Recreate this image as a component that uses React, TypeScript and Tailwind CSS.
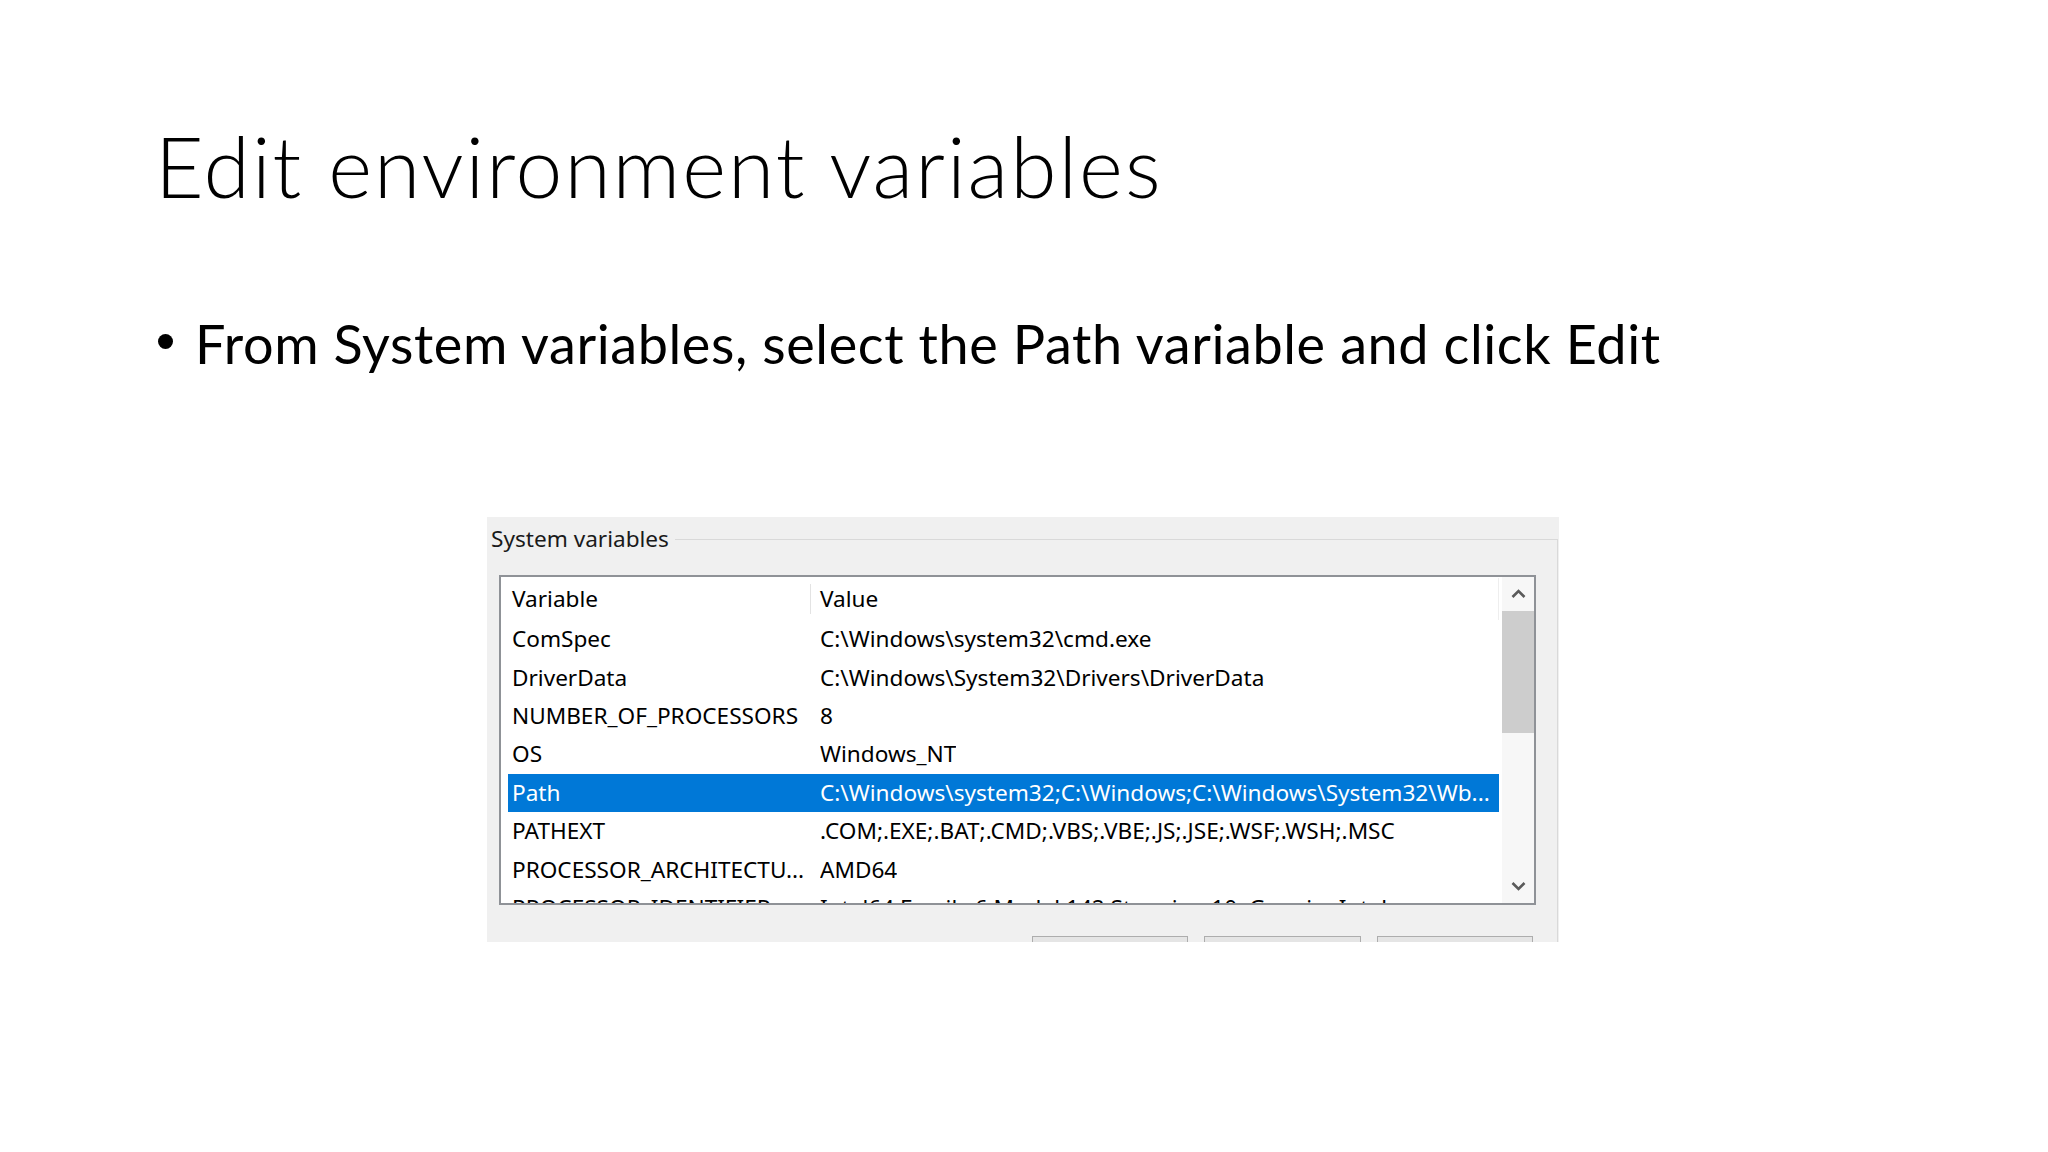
import React from "react";

const systemVariables = [
  { name: "ComSpec", value: "C:\\Windows\\system32\\cmd.exe" },
  { name: "DriverData", value: "C:\\Windows\\System32\\Drivers\\DriverData" },
  { name: "NUMBER_OF_PROCESSORS", value: "8" },
  { name: "OS", value: "Windows_NT" },
  {
    name: "Path",
    value: "C:\\Windows\\system32;C:\\Windows;C:\\Windows\\System32\\Wb...",
    selected: true,
  },
  { name: "PATHEXT", value: ".COM;.EXE;.BAT;.CMD;.VBS;.VBE;.JS;.JSE;.WSF;.WSH;.MSC" },
  { name: "PROCESSOR_ARCHITECTU...", value: "AMD64" },
  { name: "PROCESSOR_IDENTIFIER", value: "Intel64 Family 6 Model 142 Stepping 10, GenuineIntel" },
];

const Chevron = ({ up }: { up?: boolean }) => (
  <svg width="15" height="10" viewBox="0 0 15 10" fill="none">
    <polyline
      points={up ? "1.5,8 7.5,2 13.5,8" : "1.5,2 7.5,8 13.5,2"}
      stroke="#5a5a5a"
      strokeWidth="2.6"
    />
  </svg>
);

const VariableRow = ({
  name,
  value,
  selected,
}: {
  name: string;
  value: string;
  selected?: boolean;
}) => {
  return (
    <div
      className={`ml-[7px] flex h-[38.4px] shrink-0 items-center whitespace-nowrap ${
        selected ? "bg-[#0078d7] text-white" : "text-black"
      }`}
    >
      <span className="w-[312px] shrink-0 overflow-hidden pl-[4px]">{name}</span>
      <span className="overflow-hidden">{value}</span>
    </div>
  );
};

const SystemVariablesPanel = () => {
  return (
    <div className="ml-[487px] mt-[146px] h-[425px] w-[1072px] overflow-hidden bg-[#f0f0f0] pl-[4px] pr-[1px] pt-[8px] [font-family:'Noto_Sans',sans-serif] text-[22.6px]">
      <fieldset className="border-r border-t border-[#d9d9d9]">
        <legend className="h-[28px] pr-[6px] leading-[28px] text-[#1a1a1a]">System variables</legend>

        {/* list view */}
        <div className="ml-[8px] mt-[22px] flex h-[330px] w-[1037px] border-2 border-[#8f9297] bg-white">
          <div className="flex min-w-0 flex-1 flex-col overflow-hidden">
            <div className="ml-[7px] flex h-[43px] shrink-0 items-center text-black">
              <span className="w-[302px] shrink-0 pl-[4px]">Variable</span>
              <span className="h-[30px] w-px bg-[#e3e3e3]" />
              <span className="flex-1 pl-[9px]">Value</span>
              <span className="h-[42px] w-px bg-[#eeeeee]" />
            </div>
            {systemVariables.map((v) => (
              <VariableRow key={v.name} name={v.name} value={v.value} selected={v.selected} />
            ))}
          </div>

          {/* scrollbar */}
          <div className="ml-[3px] flex w-[32px] shrink-0 flex-col bg-[#f7f7f7]">
            <div className="flex h-[34px] items-center justify-center">
              <Chevron up />
            </div>
            <div className="h-[122px] bg-[#cdcdcd]" />
            <div className="flex-1" />
            <div className="flex h-[34px] items-center justify-center">
              <Chevron />
            </div>
          </div>
        </div>

        {/* buttons */}
        <div className="mt-[31px] flex justify-end gap-[16px] pr-[24px]">
          <div className="h-[44px] w-[156px] border border-[#adadad] bg-[#e5e5e5]" />
          <div className="h-[44px] w-[157px] border border-[#adadad] bg-[#e5e5e5]" />
          <div className="h-[44px] w-[156px] border border-[#adadad] bg-[#e5e5e5]" />
        </div>
      </fieldset>
    </div>
  );
};

export default function App() {
  return (
    <div className="h-[1152px] w-[2048px] overflow-hidden bg-white text-black">
      <h1 className="pl-[155px] pt-[124px] text-[84px] font-light leading-none tracking-[2px] [font-family:Lato,sans-serif]">
        Edit environment variables
      </h1>

      <div className="mt-[109px] flex pl-[158px] [font-family:Lato,sans-serif]">
        <span className="mt-[17px] h-[15px] w-[15px] shrink-0 rounded-full bg-black" />
        <p className="ml-[22px] text-[54px] leading-none tracking-[0.6px]">
          From System variables, select the Path variable and click Edit
        </p>
      </div>

      <SystemVariablesPanel />
    </div>
  );
}
